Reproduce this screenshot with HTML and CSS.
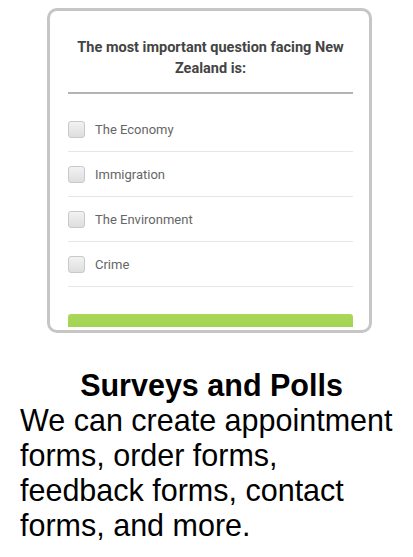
FILE: index.html
```html
<!DOCTYPE html>
<html>
<head>
<meta charset="utf-8">
<link rel="stylesheet" href="styles.css">
</head>
<body>
<div class="card">
  <div class="screen">
    <h2 class="question">The most important question facing New Zealand is:</h2>
    <div class="rule"></div>
    <ul class="options">
      <li class="option"><span class="box"></span><span class="label">The Economy</span></li>
      <li class="option"><span class="box"></span><span class="label">Immigration</span></li>
      <li class="option"><span class="box"></span><span class="label">The Environment</span></li>
      <li class="option"><span class="box"></span><span class="label">Crime</span></li>
    </ul>
    <div class="submit"></div>
  </div>
</div>
<div class="caption">
  <h1 class="title">Surveys and Polls</h1>
  <p class="text">We can create appointment forms, order forms, feedback forms, contact forms, and more.</p>
</div>
</body>
</html>
```
FILE: styles.css
```css
html, body {
  margin: 0;
  padding: 0;
  background: #ffffff;
}

.card {
  width: 319px;
  height: 319px;
  margin: 8px 0 0 47px;
  border: 3px solid #c6c6c6;
  border-radius: 10px;
  background: #ffffff;
  box-sizing: content-box;
}

.screen {
  height: 316px;
  overflow: hidden;
  padding: 0 16px 0 18px;
  font-family: Roboto, "Liberation Sans", sans-serif;
}

.question {
  margin: 26px 0 0 0;
  font-size: 14.5px;
  line-height: 21px;
  font-weight: 700;
  color: #444444;
  text-align: center;
}

.rule {
  height: 2px;
  margin-top: 13px;
  background: #b4b4b4;
}

.options {
  list-style: none;
  margin: 0;
  padding: 13px 0 0 0;
}

.option {
  height: 44px;
  border-bottom: 1px solid #e6e6e6;
  display: flex;
  align-items: center;
}

.box {
  width: 15px;
  height: 15px;
  border: 1px solid #c9c9c9;
  border-radius: 3px;
  background: linear-gradient(#f2f2f2, #dedede);
  flex: none;
}

.label {
  margin-left: 10px;
  font-size: 13px;
  color: #666666;
}

.submit {
  margin-top: 27px;
  height: 40px;
  border-radius: 3px;
  background: linear-gradient(#a9d75a, #9ccb45);
}

.caption {
  margin-top: 35px;
  padding: 0 14px 0 20px;
  font-family: "Liberation Sans", Arial, sans-serif;
  color: #000000;
}

.title {
  margin: 0;
  padding-left: 4px;
  font-size: 30.5px;
  font-weight: 700;
  line-height: normal;
  text-align: center;
}

.text {
  margin: 0;
  font-size: 30.5px;
  line-height: normal;
}
```
